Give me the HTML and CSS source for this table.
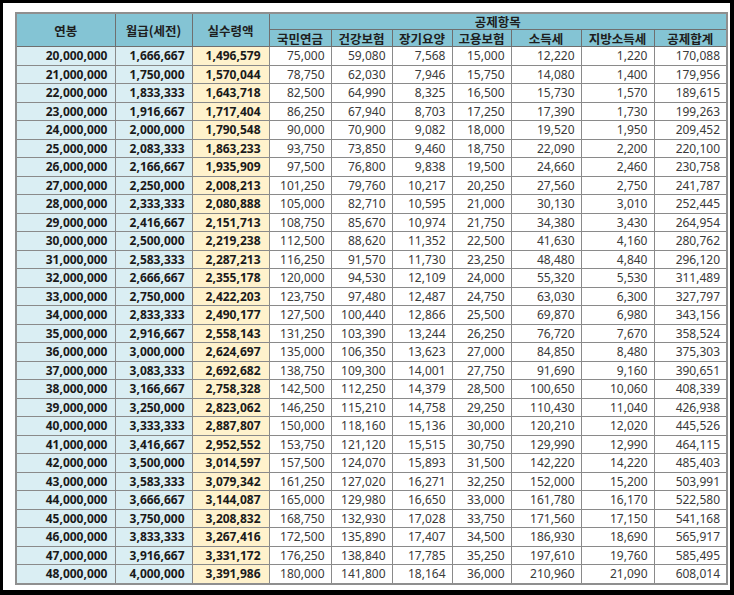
FILE: index.html
```html
<!DOCTYPE html>
<html lang="ko">
<head>
<meta charset="utf-8">
<title>연봉 실수령액 표</title>
<link rel="stylesheet" href="styles.css">
</head>
<body>
<div class="frame">
<table class="salary">
<colgroup>
<col class="c-year"><col class="c-month"><col class="c-net">
<col class="c-np"><col class="c-hi"><col class="c-ltc"><col class="c-ei">
<col class="c-tax"><col class="c-ltax"><col class="c-sum">
</colgroup>
<thead>
<tr class="h1">
<th rowspan="2">연봉</th>
<th rowspan="2">월급(세전)</th>
<th rowspan="2">실수령액</th>
<th colspan="7">공제항목</th>
</tr>
<tr class="h2">
<th>국민연금</th><th>건강보험</th><th>장기요양</th><th>고용보험</th><th>소득세</th><th>지방소득세</th><th>공제합계</th>
</tr>
</thead>
<tbody id="rows">
<tr><td class="k">20,000,000</td><td class="k">1,666,667</td><td class="n">1,496,579</td><td>75,000</td><td>59,080</td><td>7,568</td><td>15,000</td><td>12,220</td><td>1,220</td><td>170,088</td></tr>
<tr><td class="k">21,000,000</td><td class="k">1,750,000</td><td class="n">1,570,044</td><td>78,750</td><td>62,030</td><td>7,946</td><td>15,750</td><td>14,080</td><td>1,400</td><td>179,956</td></tr>
<tr><td class="k">22,000,000</td><td class="k">1,833,333</td><td class="n">1,643,718</td><td>82,500</td><td>64,990</td><td>8,325</td><td>16,500</td><td>15,730</td><td>1,570</td><td>189,615</td></tr>
<tr><td class="k">23,000,000</td><td class="k">1,916,667</td><td class="n">1,717,404</td><td>86,250</td><td>67,940</td><td>8,703</td><td>17,250</td><td>17,390</td><td>1,730</td><td>199,263</td></tr>
<tr><td class="k">24,000,000</td><td class="k">2,000,000</td><td class="n">1,790,548</td><td>90,000</td><td>70,900</td><td>9,082</td><td>18,000</td><td>19,520</td><td>1,950</td><td>209,452</td></tr>
<tr><td class="k">25,000,000</td><td class="k">2,083,333</td><td class="n">1,863,233</td><td>93,750</td><td>73,850</td><td>9,460</td><td>18,750</td><td>22,090</td><td>2,200</td><td>220,100</td></tr>
<tr><td class="k">26,000,000</td><td class="k">2,166,667</td><td class="n">1,935,909</td><td>97,500</td><td>76,800</td><td>9,838</td><td>19,500</td><td>24,660</td><td>2,460</td><td>230,758</td></tr>
<tr><td class="k">27,000,000</td><td class="k">2,250,000</td><td class="n">2,008,213</td><td>101,250</td><td>79,760</td><td>10,217</td><td>20,250</td><td>27,560</td><td>2,750</td><td>241,787</td></tr>
<tr><td class="k">28,000,000</td><td class="k">2,333,333</td><td class="n">2,080,888</td><td>105,000</td><td>82,710</td><td>10,595</td><td>21,000</td><td>30,130</td><td>3,010</td><td>252,445</td></tr>
<tr><td class="k">29,000,000</td><td class="k">2,416,667</td><td class="n">2,151,713</td><td>108,750</td><td>85,670</td><td>10,974</td><td>21,750</td><td>34,380</td><td>3,430</td><td>264,954</td></tr>
<tr><td class="k">30,000,000</td><td class="k">2,500,000</td><td class="n">2,219,238</td><td>112,500</td><td>88,620</td><td>11,352</td><td>22,500</td><td>41,630</td><td>4,160</td><td>280,762</td></tr>
<tr><td class="k">31,000,000</td><td class="k">2,583,333</td><td class="n">2,287,213</td><td>116,250</td><td>91,570</td><td>11,730</td><td>23,250</td><td>48,480</td><td>4,840</td><td>296,120</td></tr>
<tr><td class="k">32,000,000</td><td class="k">2,666,667</td><td class="n">2,355,178</td><td>120,000</td><td>94,530</td><td>12,109</td><td>24,000</td><td>55,320</td><td>5,530</td><td>311,489</td></tr>
<tr><td class="k">33,000,000</td><td class="k">2,750,000</td><td class="n">2,422,203</td><td>123,750</td><td>97,480</td><td>12,487</td><td>24,750</td><td>63,030</td><td>6,300</td><td>327,797</td></tr>
<tr><td class="k">34,000,000</td><td class="k">2,833,333</td><td class="n">2,490,177</td><td>127,500</td><td>100,440</td><td>12,866</td><td>25,500</td><td>69,870</td><td>6,980</td><td>343,156</td></tr>
<tr><td class="k">35,000,000</td><td class="k">2,916,667</td><td class="n">2,558,143</td><td>131,250</td><td>103,390</td><td>13,244</td><td>26,250</td><td>76,720</td><td>7,670</td><td>358,524</td></tr>
<tr><td class="k">36,000,000</td><td class="k">3,000,000</td><td class="n">2,624,697</td><td>135,000</td><td>106,350</td><td>13,623</td><td>27,000</td><td>84,850</td><td>8,480</td><td>375,303</td></tr>
<tr><td class="k">37,000,000</td><td class="k">3,083,333</td><td class="n">2,692,682</td><td>138,750</td><td>109,300</td><td>14,001</td><td>27,750</td><td>91,690</td><td>9,160</td><td>390,651</td></tr>
<tr><td class="k">38,000,000</td><td class="k">3,166,667</td><td class="n">2,758,328</td><td>142,500</td><td>112,250</td><td>14,379</td><td>28,500</td><td>100,650</td><td>10,060</td><td>408,339</td></tr>
<tr><td class="k">39,000,000</td><td class="k">3,250,000</td><td class="n">2,823,062</td><td>146,250</td><td>115,210</td><td>14,758</td><td>29,250</td><td>110,430</td><td>11,040</td><td>426,938</td></tr>
<tr><td class="k">40,000,000</td><td class="k">3,333,333</td><td class="n">2,887,807</td><td>150,000</td><td>118,160</td><td>15,136</td><td>30,000</td><td>120,210</td><td>12,020</td><td>445,526</td></tr>
<tr><td class="k">41,000,000</td><td class="k">3,416,667</td><td class="n">2,952,552</td><td>153,750</td><td>121,120</td><td>15,515</td><td>30,750</td><td>129,990</td><td>12,990</td><td>464,115</td></tr>
<tr><td class="k">42,000,000</td><td class="k">3,500,000</td><td class="n">3,014,597</td><td>157,500</td><td>124,070</td><td>15,893</td><td>31,500</td><td>142,220</td><td>14,220</td><td>485,403</td></tr>
<tr><td class="k">43,000,000</td><td class="k">3,583,333</td><td class="n">3,079,342</td><td>161,250</td><td>127,020</td><td>16,271</td><td>32,250</td><td>152,000</td><td>15,200</td><td>503,991</td></tr>
<tr><td class="k">44,000,000</td><td class="k">3,666,667</td><td class="n">3,144,087</td><td>165,000</td><td>129,980</td><td>16,650</td><td>33,000</td><td>161,780</td><td>16,170</td><td>522,580</td></tr>
<tr><td class="k">45,000,000</td><td class="k">3,750,000</td><td class="n">3,208,832</td><td>168,750</td><td>132,930</td><td>17,028</td><td>33,750</td><td>171,560</td><td>17,150</td><td>541,168</td></tr>
<tr><td class="k">46,000,000</td><td class="k">3,833,333</td><td class="n">3,267,416</td><td>172,500</td><td>135,890</td><td>17,407</td><td>34,500</td><td>186,930</td><td>18,690</td><td>565,917</td></tr>
<tr><td class="k">47,000,000</td><td class="k">3,916,667</td><td class="n">3,331,172</td><td>176,250</td><td>138,840</td><td>17,785</td><td>35,250</td><td>197,610</td><td>19,760</td><td>585,495</td></tr>
<tr><td class="k">48,000,000</td><td class="k">4,000,000</td><td class="n">3,391,986</td><td>180,000</td><td>141,800</td><td>18,164</td><td>36,000</td><td>210,960</td><td>21,090</td><td>608,014</td></tr>
</tbody>
</table>
</div>
</body>
</html>
```

FILE: styles.css
```css
html, body {
  margin: 0;
  padding: 0;
  background: #000;
}
body {
  width: 734px;
  height: 595px;
  overflow: hidden;
}
.frame {
  margin: 3px 4px 0 3px;
  width: 727px;
  height: 587px;
  box-sizing: border-box;
  background: #fff;
  padding: 9px 0 0 12px;
}
.salary {
  border-collapse: collapse;
  table-layout: fixed;
  width: 712px;
  border: 2px solid #8f8f8f;
  font-family: "Noto Sans", "Noto Sans CJK KR", sans-serif;
  font-size: 12px;
  color: #3a3a3a;
}
.c-year { width: 99px; }
.c-month { width: 77px; }
.c-net { width: 77px; }
.c-np { width: 62px; }
.c-hi { width: 61px; }
.c-ltc { width: 60px; }
.c-ei { width: 59px; }
.c-tax { width: 70px; }
.c-ltax { width: 73px; }
.c-sum { width: 73px; }

.salary th {
  background: #84c4d4;
  border: 1px solid #6f6f6f;
  font-family: "Noto Sans CJK KR", sans-serif;
  font-weight: 700;
  font-size: 12.5px;
  color: #1e1e1e;
  padding: 0;
  line-height: 15px;
  white-space: nowrap;
  text-align: center;
  vertical-align: middle;
}
.salary .h1 { height: 16px; }
.salary .h2 { height: 17px; }

.salary td {
  border: 1px solid #8a8a8a;
  padding: 0 6px 0 0;
  height: 17.5px;
  line-height: 15px;
  text-align: right;
  white-space: nowrap;
  vertical-align: middle;
}
.salary td.k {
  background: #daeef3;
  font-weight: 700;
  color: #1a1a1a;
  padding-right: 7px;
}
.salary td.n {
  background: #fff2cc;
  font-weight: 700;
  color: #1a1a1a;
  padding-right: 8px;
}
```
